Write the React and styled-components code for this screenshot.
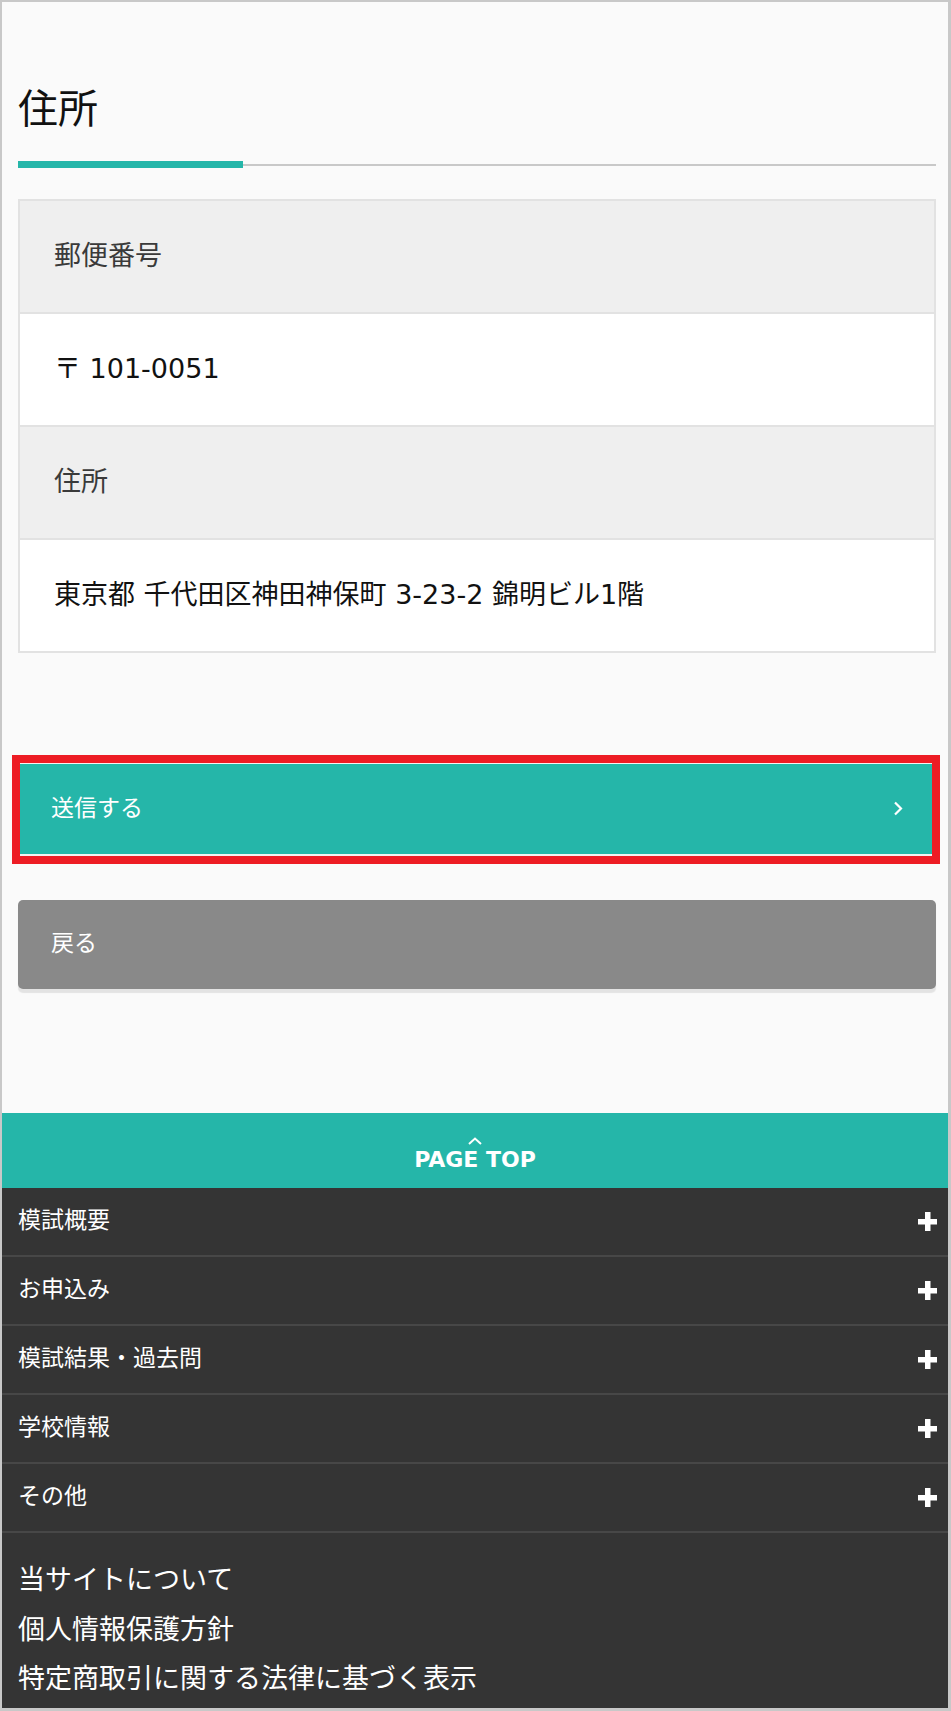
import React from 'react'
import styled, { createGlobalStyle } from 'styled-components';

const GlobalStyle = createGlobalStyle`
  html, body {
    margin: 0;
    padding: 0;
    background: #fafafa;
  }
  body {
    font-family: "DejaVu Sans", "Noto Sans CJK JP", sans-serif;
  }
  * { box-sizing: border-box; }
`;

const menuItems = ['模試概要', 'お申込み', '模試結果・過去問', '学校情報', 'その他'];
const links = ['当サイトについて', '個人情報保護方針', '特定商取引に関する法律に基づく表示'];

const rows = [
    { label: '郵便番号', value: '〒 101-0051' },
    { label: '住所', value: '東京都 千代田区神田神保町 3-23-2 錦明ビル1階' },
];

const App = () => {
  return (
    <>
      <GlobalStyle />
      <Frame>
        <Main>
          <Heading>住所</Heading>
          <Rule>
            <RuleAccent />
            <RuleLine />
          </Rule>
          <InfoTable>
            {rows.map((row) => (
              <React.Fragment key={row.label}>
                <Cell $head>{row.label}</Cell>
                <Cell>{row.value}</Cell>
              </React.Fragment>
            ))}
          </InfoTable>
          <Highlight>
            <SubmitButton type="button">
              <span>送信する</span>
              <svg width="10" height="15" viewBox="0 0 10 15">
                <path d="M2 1.5 L8 7.5 L2 13.5" fill="none" stroke="#fff" strokeWidth="2.2" />
              </svg>
            </SubmitButton>
          </Highlight>
          <BackButton type="button">戻る</BackButton>
        </Main>
        <PageTop>
          <svg width="14" height="8" viewBox="0 0 14 8">
            <path d="M1 7 L7 1.5 L13 7" fill="none" stroke="#fff" strokeWidth="2" />
          </svg>
          <PageTopLabel>PAGE TOP</PageTopLabel>
        </PageTop>
        <Menu>
          {menuItems.map((item) => (
            <MenuRow key={item}>
              <span>{item}</span>
              <svg width="19" height="19" viewBox="0 0 19 19">
                <rect x="7" y="0" width="5.5" height="19" fill="#fff" />
                <rect x="0" y="7" width="19" height="5.5" fill="#fff" />
              </svg>
            </MenuRow>
          ))}
        </Menu>
        <Links>
          {links.map((link) => (
            <LinkItem key={link}>{link}</LinkItem>
          ))}
        </Links>
      </Frame>
    </>
  )
}

export default App;

const Frame = styled.div`
    width: 951px;
    border-style: solid;
    border-color: #c8c8c8;
    border-width: 2px 3px 3px 2px;
    background-color: #fafafa;
    display: flex;
    flex-direction: column;
`;

const Main = styled.main`
    padding: 78px 12px 124px 16px;
    display: flex;
    flex-direction: column;
`;

const Heading = styled.h1`
    margin: 0;
    font-size: 40px;
    line-height: 58px;
    padding-bottom: 2px;
    font-weight: normal;
    color: #111;
`;

const Rule = styled.div`
    margin-top: 21px;
    height: 7px;
    display: flex;
    align-items: center;
`;

const RuleAccent = styled.div`
    width: 225px;
    height: 7px;
    background-color: #25b6a9;
`;

const RuleLine = styled.div`
    flex: 1;
    height: 2px;
    background-color: #c8c8c8;
`;

const InfoTable = styled.div`
    margin-top: 31px;
    border: 2px solid #e2e2e2;
    display: flex;
    flex-direction: column;
`;

const Cell = styled.div`
    height: 113px;
    padding: 0 34px 6px;
    display: flex;
    align-items: center;
    font-size: 27px;
    border-bottom: 2px solid #e2e2e2;
    background-color: ${props => props.$head ? '#efefef' : '#fff'};
    color: ${props => props.$head ? '#3a3a3a' : '#111'};
    &:last-child{
        height: 111px;
        border-bottom: none;
    }
`;

const Highlight = styled.div`
    margin: 102px -4px 0 -6px;
    border: 8px solid #ed1c24;
    padding: 1px 0 2px;
    background-color: #f2f2f2;
`;

const SubmitButton = styled.button`
    width: 100%;
    height: 90px;
    border: none;
    background-color: #25b6a9;
    color: #fff;
    font-family: inherit;
    font-size: 23px;
    padding: 0 29px 6px 31px;
    display: flex;
    justify-content: space-between;
    align-items: center;
    cursor: pointer;
    svg{
        margin-top: 4px;
    }
`;

const BackButton = styled.button`
    margin-top: 36px;
    height: 89px;
    border: none;
    border-radius: 5px;
    background-color: #898989;
    color: #fff;
    font-family: inherit;
    font-size: 23px;
    text-align: left;
    padding: 0 33px 7px;
    box-shadow: 0 4px 1px #e3e3e3;
    cursor: pointer;
`;

const PageTop = styled.div`
    height: 75px;
    padding-top: 24px;
    background-color: #25b6a9;
    display: flex;
    flex-direction: column;
    align-items: center;
    gap: 4px;
`;

const PageTopLabel = styled.span`
    color: #fff;
    font-size: 22px;
    line-height: 22px;
    font-weight: bold;
`;

const Menu = styled.nav`
    background-color: #343434;
    display: flex;
    flex-direction: column;
`;

const MenuRow = styled.div`
    height: 69px;
    padding: 0 11px 0 16px;
    border-bottom: 2px solid #474747;
    display: flex;
    justify-content: space-between;
    align-items: center;
    color: #fff;
    font-size: 23px;
    span{
        margin-bottom: 7px;
    }
`;

const Links = styled.div`
    height: 175px;
    padding: 22px 16px 0;
    background-color: #343434;
    display: flex;
    flex-direction: column;
`;

const LinkItem = styled.a`
    color: #fff;
    font-size: 27px;
    line-height: 49.5px;
    text-decoration: none;
`;
